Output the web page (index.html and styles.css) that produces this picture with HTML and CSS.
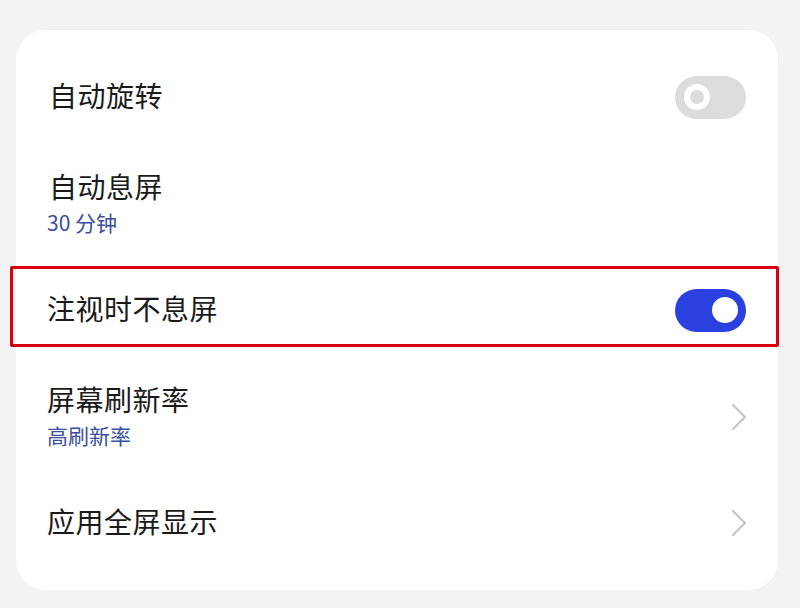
FILE: index.html
```html
<!DOCTYPE html>
<html lang="zh-CN">
<head>
<meta charset="utf-8">
<link rel="stylesheet" href="styles.css">
</head>
<body>
<div class="card">
  <div class="row r1">
    <div class="text"><div class="title">自动旋转</div></div>
    <div class="switch off"><span class="knob"></span></div>
  </div>
  <div class="row r2">
    <div class="text"><div class="title">自动息屏</div><div class="sub">30 分钟</div></div>
  </div>
  <div class="row r3 marked">
    <div class="text"><div class="title">注视时不息屏</div></div>
    <div class="switch on"><span class="knob"></span></div>
  </div>
  <div class="row r4">
    <div class="text"><div class="title">屏幕刷新率</div><div class="sub">高刷新率</div></div>
    <svg class="chev" width="18" height="28" viewBox="0 0 18 28"><path d="M3 2 L15 14 L3 26" fill="none" stroke="#c4c4c4" stroke-width="2.2" stroke-linecap="round" stroke-linejoin="round"/></svg>
  </div>
  <div class="row r5">
    <div class="text"><div class="title">应用全屏显示</div></div>
    <svg class="chev" width="18" height="28" viewBox="0 0 18 28"><path d="M3 2 L15 14 L3 26" fill="none" stroke="#c4c4c4" stroke-width="2.2" stroke-linecap="round" stroke-linejoin="round"/></svg>
  </div>
</div>
</body>
</html>
```
FILE: styles.css
```css
html, body {
  margin: 0;
  padding: 0;
}
body {
  background: #f3f3f3;
  width: 800px;
  height: 608px;
  overflow: hidden;
  font-family: "Noto Sans CJK SC", "Noto Sans", sans-serif;
  padding-top: 30px;
  box-sizing: border-box;
}
.card {
  margin-left: 16px;
  width: 762px;
  height: 560px;
  box-sizing: border-box;
  background: #ffffff;
  border-radius: 30px;
  padding: 20px 32px 26px 33px;
  display: flex;
  flex-direction: column;
}
.row {
  display: flex;
  align-items: center;
  justify-content: space-between;
  flex: none;
}
.r1 { height: 90px; }
.r2 { height: 124px; }
.r3 { height: 88px; position: relative; }
.r4 { height: 126px; }
.r5 { height: 86px; }
.title {
  font-size: 28px;
  line-height: 36px;
  color: #1a1a1a;
  letter-spacing: 0.5px;
}
.sub {
  font-size: 21px;
  line-height: 28px;
  color: #3a4d9e;
  margin-top: 4px;
  margin-left: -2px;
}
.r3 .title, .r4 .title, .r5 .title { margin-left: -2px; }
.switch {
  width: 71px;
  height: 43px;
  border-radius: 22px;
  position: relative;
  margin-top: 4px;
}
.switch.off { background: #dcdcdc; }
.switch.on { background: #2a40e0; }
.knob {
  position: absolute;
  top: 8.5px;
  width: 26px;
  height: 26px;
  border-radius: 50%;
  box-sizing: border-box;
}
.off .knob {
  left: 9px;
  border: 6px solid #ffffff;
  background: #dcdcdc;
}
.on .knob {
  left: 37px;
  background: #ffffff;
}
.chev {
  margin-right: -2px;
  margin-top: 4px;
}
.marked::after {
  content: "";
  position: absolute;
  left: -39px;
  right: -33px;
  top: 2px;
  height: 81px;
  border: 3px solid #d6000f;
  border-radius: 2px;
  box-sizing: border-box;
}
```
